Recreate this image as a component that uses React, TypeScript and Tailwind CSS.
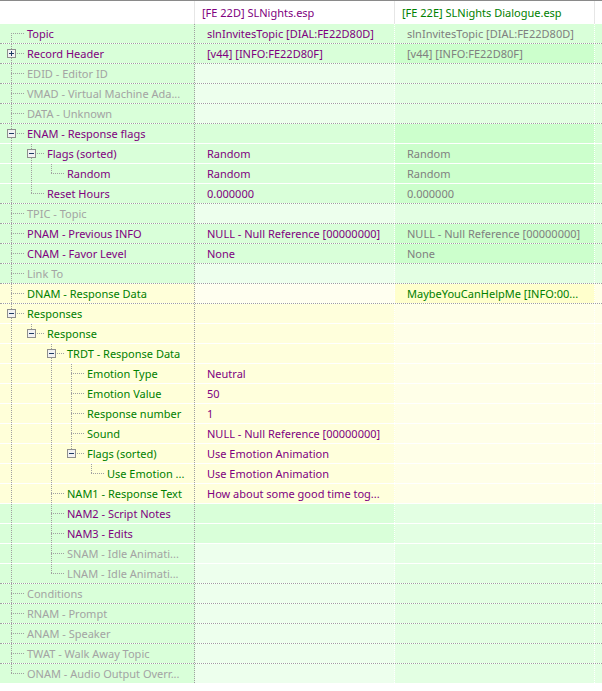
type Row = {
  name: string;
  level: number;
  open?: boolean;
  tone: string;
  bg1: string;
  v1?: string;
  t1?: string;
  bg2: string;
  v2?: string;
  t2?: string;
  bg3: string;
  bg4: string;
};

// name / value tones
const PURPLE = "text-[#800080]";
const GREEN = "text-[#008000]";
const FADED = "text-[#a3a3a3]";
const DIM = "text-[#808080]";

// cell backgrounds
const G = "bg-[#d9ffd9]";
const GS = "bg-[#ccffcc]";
const GL = "bg-[#edffed]";
const GE = "bg-[#e3ffe3]";
const Y = "bg-[#ffffd9]";
const YL = "bg-[#fffff0]";
const YS = "bg-[#ffffcc]";
const Y2 = "bg-[#ffffdc]";
const Y3 = "bg-[#ffffe8]";

const NULL_REF = "NULL - Null Reference [00000000]";

const rows: Row[] = [
  { name: "Topic", level: 0, tone: PURPLE, bg1: G, v1: "slnInvitesTopic [DIAL:FE22D80D]", t1: PURPLE, bg2: G, v2: "slnInvitesTopic [DIAL:FE22D80D]", t2: DIM, bg3: G, bg4: G },
  { name: "Record Header", level: 0, open: false, tone: PURPLE, bg1: G, v1: "[v44] [INFO:FE22D80F]", t1: PURPLE, bg2: G, v2: "[v44] [INFO:FE22D80F]", t2: DIM, bg3: GS, bg4: G },
  { name: "EDID - Editor ID", level: 0, tone: FADED, bg1: G, bg2: GL, bg3: GE, bg4: GE },
  { name: "VMAD - Virtual Machine Ada...", level: 0, tone: FADED, bg1: G, bg2: GL, bg3: GE, bg4: GE },
  { name: "DATA - Unknown", level: 0, tone: FADED, bg1: G, bg2: GL, bg3: GE, bg4: GE },
  { name: "ENAM - Response flags", level: 0, open: true, tone: PURPLE, bg1: G, bg2: G, bg3: GS, bg4: G },
  { name: "Flags (sorted)", level: 1, open: true, tone: PURPLE, bg1: G, v1: "Random", t1: PURPLE, bg2: G, v2: "Random", t2: DIM, bg3: GS, bg4: G },
  { name: "Random", level: 2, tone: PURPLE, bg1: G, v1: "Random", t1: PURPLE, bg2: G, v2: "Random", t2: DIM, bg3: GS, bg4: G },
  { name: "Reset Hours", level: 1, tone: PURPLE, bg1: G, v1: "0.000000", t1: PURPLE, bg2: G, v2: "0.000000", t2: DIM, bg3: GS, bg4: G },
  { name: "TPIC - Topic", level: 0, tone: FADED, bg1: G, bg2: GL, bg3: GE, bg4: GE },
  { name: "PNAM - Previous INFO", level: 0, tone: PURPLE, bg1: G, v1: NULL_REF, t1: PURPLE, bg2: G, v2: NULL_REF, t2: DIM, bg3: GS, bg4: G },
  { name: "CNAM - Favor Level", level: 0, tone: PURPLE, bg1: G, v1: "None", t1: PURPLE, bg2: G, v2: "None", t2: DIM, bg3: GS, bg4: G },
  { name: "Link To", level: 0, tone: FADED, bg1: G, bg2: GL, bg3: GE, bg4: GE },
  { name: "DNAM - Response Data", level: 0, tone: GREEN, bg1: Y, bg2: YL, v2: "MaybeYouCanHelpMe [INFO:00...", t2: GREEN, bg3: YS, bg4: Y3 },
  { name: "Responses", level: 0, open: true, tone: GREEN, bg1: Y, bg2: Y2, bg3: Y3, bg4: Y3 },
  { name: "Response", level: 1, open: true, tone: GREEN, bg1: Y, bg2: Y2, bg3: Y3, bg4: Y3 },
  { name: "TRDT - Response Data", level: 2, open: true, tone: GREEN, bg1: Y, bg2: Y2, bg3: Y3, bg4: Y3 },
  { name: "Emotion Type", level: 3, tone: GREEN, bg1: Y, v1: "Neutral", t1: PURPLE, bg2: Y2, bg3: Y3, bg4: Y3 },
  { name: "Emotion Value", level: 3, tone: GREEN, bg1: Y, v1: "50", t1: PURPLE, bg2: Y2, bg3: Y3, bg4: Y3 },
  { name: "Response number", level: 3, tone: GREEN, bg1: Y, v1: "1", t1: PURPLE, bg2: Y2, bg3: Y3, bg4: Y3 },
  { name: "Sound", level: 3, tone: GREEN, bg1: Y, v1: NULL_REF, t1: PURPLE, bg2: Y2, bg3: Y3, bg4: Y3 },
  { name: "Flags (sorted)", level: 3, open: true, tone: GREEN, bg1: Y, v1: "Use Emotion Animation", t1: PURPLE, bg2: Y2, bg3: Y3, bg4: Y3 },
  { name: "Use Emotion ...", level: 4, tone: GREEN, bg1: Y, v1: "Use Emotion Animation", t1: PURPLE, bg2: Y2, bg3: Y3, bg4: Y3 },
  { name: "NAM1 - Response Text", level: 2, tone: GREEN, bg1: Y, v1: "How about some good time tog...", t1: PURPLE, bg2: Y2, bg3: Y3, bg4: Y3 },
  { name: "NAM2 - Script Notes", level: 2, tone: PURPLE, bg1: G, bg2: G, bg3: GE, bg4: GE },
  { name: "NAM3 - Edits", level: 2, tone: PURPLE, bg1: G, bg2: G, bg3: GE, bg4: GE },
  { name: "SNAM - Idle Animati...", level: 2, tone: FADED, bg1: G, bg2: GL, bg3: GE, bg4: GE },
  { name: "LNAM - Idle Animati...", level: 2, tone: FADED, bg1: G, bg2: GL, bg3: GE, bg4: GE },
  { name: "Conditions", level: 0, tone: FADED, bg1: G, bg2: GL, bg3: GE, bg4: GE },
  { name: "RNAM - Prompt", level: 0, tone: FADED, bg1: G, bg2: GL, bg3: GE, bg4: GE },
  { name: "ANAM - Speaker", level: 0, tone: FADED, bg1: G, bg2: GL, bg3: GE, bg4: GE },
  { name: "TWAT - Walk Away Topic", level: 0, tone: FADED, bg1: G, bg2: GL, bg3: GE, bg4: GE },
  { name: "ONAM - Audio Output Overr...", level: 0, tone: FADED, bg1: G, bg2: GL, bg3: GE, bg4: GE },
];

// does a node at `level` appear again after row i before the branch closes?
const hasNextAt = (i: number, level: number) => {
  for (let j = i + 1; j < rows.length; j++) {
    if (rows[j].level < level) return false;
    if (rows[j].level === level) return true;
  }
  return false;
};

const LINE = "#a0a0a0";

const TreeLines = ({ row, index }: { row: Row; index: number }) => {
  const w = 20 * (row.level + 1) + 7;
  const x = 20 * row.level + 11.5;
  const rails: boolean[] = [];
  for (let d = 0; d < row.level; d++) rails.push(hasNextAt(index, d));
  const next = hasNextAt(index, row.level);

  return (
    <svg width={w} height={19} className="shrink-0" shapeRendering="crispEdges">
      {rails.map((on, d) =>
        on ? (
          <line key={d} x1={20 * d + 11.5} y1={0} x2={20 * d + 11.5} y2={19} stroke={LINE} strokeDasharray="1 1" />
        ) : null
      )}
      <line x1={x} y1={index === 0 ? 9 : 0} x2={x} y2={next ? 19 : 10} stroke={LINE} strokeDasharray="1 1" />
      <line x1={20 * row.level + 11} y1={9.5} x2={20 * row.level + 25} y2={9.5} stroke={LINE} strokeDasharray="1 1" />
      {row.open !== undefined && (
        <g>
          <rect x={20 * row.level + 7.5} y={5.5} width={8} height={8} fill="#f2f2f2" stroke="#8f8f8f" />
          <line x1={20 * row.level + 9} y1={9.5} x2={20 * row.level + 14} y2={9.5} stroke="#1e3a64" />
          {!row.open && (
            <line x1={x} y1={7} x2={x} y2={12} stroke="#1e3a64" />
          )}
        </g>
      )}
    </svg>
  );
};

const App = () => {
  return (
    <div
      className="w-[602px] h-[691px] bg-white overflow-hidden text-[11px] leading-[19px]"
      style={{ fontFamily: '"Noto Sans", "Open Sans", sans-serif' }}
    >
      <div className="flex h-[24px] border-t border-[#8a8a8a] bg-white">
        <div className="w-[195px] shrink-0 border-r border-[#e6e6e6]" />
        <div className="w-[200px] shrink-0 border-r border-[#e6e6e6] pl-[7px] flex items-center text-[#800080] whitespace-nowrap">
          [FE 22D] SLNights.esp
        </div>
        <div className="w-[200px] shrink-0 border-r border-[#e6e6e6] pl-[7px] flex items-center text-[#008000] whitespace-nowrap">
          [FE 22E] SLNights Dialogue.esp
        </div>
        <div className="flex-1" />
      </div>

      {rows.map((row, i) => {
        const nextRoot = i + 1 < rows.length && rows[i + 1].level === 0;
        return (
          <div
            key={i}
            className={`flex h-[20px] border-b border-dotted ${nextRoot ? "border-b-[#a0a0a0]" : "border-b-white"}`}
          >
            <div className={`w-[195px] shrink-0 flex items-center overflow-hidden border-r border-dotted border-r-[#a0a0a0] ${row.bg1}`}>
              <TreeLines row={row} index={i} />
              <span className={`whitespace-nowrap ${row.tone}`}>{row.name}</span>
            </div>
            <div className={`w-[200px] shrink-0 flex items-center overflow-hidden pl-[12px] border-r border-dotted border-r-white ${row.bg2}`}>
              {row.v1 && <span className={`whitespace-nowrap ${row.t1}`}>{row.v1}</span>}
            </div>
            <div className={`w-[200px] shrink-0 flex items-center overflow-hidden pl-[12px] border-r border-dotted border-r-white ${row.bg3}`}>
              {row.v2 && <span className={`whitespace-nowrap ${row.t2}`}>{row.v2}</span>}
            </div>
            <div className={`flex-1 ${row.bg4}`} />
          </div>
        );
      })}
    </div>
  );
};

export default App;
